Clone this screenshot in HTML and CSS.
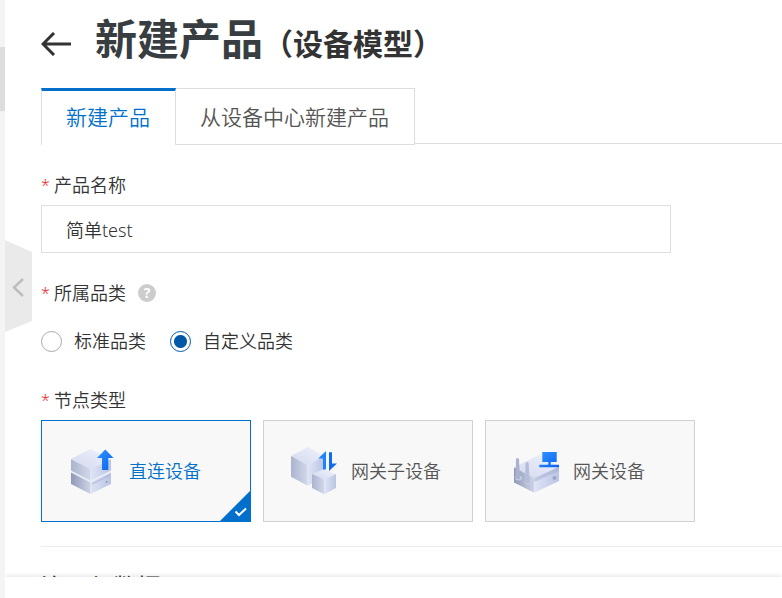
FILE: index.html
```
<!DOCTYPE html>
<html lang="zh-CN">
<head>
<meta charset="utf-8">
<title>新建产品（设备模型）</title>
<link rel="stylesheet" href="styles.css">
</head>
<body>
	<div class="sidebar"><div class="scroll-thumb"></div></div>

	<div class="page">
		<button type="button" class="collapse" aria-label="收起">
			<svg width="27" height="92" viewBox="0 0 27 92">
				<path d="M0 0L27 12V81L0 92Z" fill="#eaeaea"/>
				<path d="M18 39L9 47.500L18 56" fill="none" stroke="#bdbdbd" stroke-width="2.500"/>
			</svg>
		</button>

		<main class="content">
			<header class="title">
				<a href="#" class="back" aria-label="返回">
					<svg width="30" height="24" viewBox="0 0 30 24" fill="none" stroke="#333" stroke-width="3">
						<path d="M2 12H30M13 1L2 12L13 23"/>
					</svg>
				</a>
				<h1>新建产品<small>（设备模型）</small></h1>
			</header>

			<nav class="tabs">
				<a href="#" class="tab active">新建产品</a>
				<a href="#" class="tab">从设备中心新建产品</a>
			</nav>

			<form class="form">
				<div class="field">
					<label class="label" for="name"><span class="star">*</span>产品名称</label>
					<input class="text" id="name" type="text" value="简单test">
				</div>

				<div class="field">
					<div class="label" id="category"><span class="star">*</span>所属品类<span class="help">?</span></div>
					<div class="radios" role="radiogroup" aria-labelledby="category">
						<label class="radio"><input type="radio" name="category">标准品类</label>
						<label class="radio"><input type="radio" name="category" checked>自定义品类</label>
					</div>
				</div>

				<div class="field">
					<div class="label" id="node"><span class="star">*</span>节点类型</div>
					<div class="cards" role="radiogroup" aria-labelledby="node">
						<label class="card">
							<input type="radio" name="node" checked>
							<svg class="icon" viewBox="0 0 48 48">
								<defs>
									<linearGradient id="top" x1="0" y1="1" x2="1" y2="0"><stop offset="0" stop-color="#d2d8ee"/><stop offset="1" stop-color="#f0f2fc"/></linearGradient>
									<linearGradient id="left"><stop offset="0" stop-color="#aab4ce"/><stop offset="1" stop-color="#d2d8ea"/></linearGradient>
									<linearGradient id="dark"><stop offset="0" stop-color="#8f9ab8"/><stop offset="1" stop-color="#ced4e6"/></linearGradient>
									<linearGradient id="right"><stop offset="0" stop-color="#dfe4f6"/><stop offset="1" stop-color="#bac4e2"/></linearGradient>
									<linearGradient id="blue" x1="0" y1="0" x2="1" y2="1"><stop offset="0" stop-color="#2f93ff"/><stop offset="1" stop-color="#0a62f0"/></linearGradient>
								</defs>
								<path fill="#e9ecf7" d="M2 25L21 15L42 25L21 36Z"/>
								<path fill="url(#dark)" d="M2 25.500L21.500 35.500V47L2 37Z"/>
								<path fill="url(#right)" d="M42 25.500L21.500 35.500V47L42 37Z"/>
								<path fill="#a4b0d4" d="M23 36L41 27V29L23 38Z" opacity=".5"/>
								<circle cx="37.500" cy="35" r="1" fill="#8c9ac4"/>
								<path fill="url(#left)" d="M2 12L21.500 22V33.500L2 23.500Z"/>
								<path fill="url(#right)" d="M42 12L21.500 22V33.500L42 23.500Z"/>
								<path fill="url(#top)" d="M21.500 2L42 12L21.500 22L2 12Z"/>
								<path fill="url(#blue)" d="M36.300 2.500L44.500 11H39.300V23H33V11H28Z"/>
							</svg>
							<span>直连设备</span>
							<svg class="check" viewBox="0 0 30 30">
								<path d="M30 0V30H0Z" fill="#0070cc"/>
								<path d="M15.500 20.500L19 24L26 17.500" fill="none" stroke="#fff" stroke-width="2"/>
							</svg>
						</label>
						<label class="card">
							<input type="radio" name="node">
							<svg class="icon" viewBox="0 0 48 48">
								<path fill="url(#top)" d="M16.700 0L33.300 9L16.700 18L0 9Z"/>
								<path fill="url(#left)" d="M0 9L16.700 18V38.700L0 29.700Z"/>
								<path fill="url(#right)" d="M33.300 9L16.700 18V38.700L33.300 29.700Z"/>
								<path fill="url(#top)" d="M33.300 22L45 27L33.300 32.500L21 27Z"/>
								<path fill="url(#left)" d="M21 27L33.300 32.500V47.300L21 41Z"/>
								<path fill="url(#right)" d="M45 27L33.300 32.500V47.300L45 41Z"/>
								<path fill="#1f83fb" d="M35 4V22.500H32V11.500H27.300Z"/>
								<path fill="#0f6cf2" d="M38 24V5.300H41V16.500H46Z"/>
							</svg>
							<span>网关子设备</span>
						</label>
						<label class="card">
							<input type="radio" name="node">
							<svg class="icon" viewBox="0 0 48 48">
								<path fill="url(#top)" d="M26.300 7.500L46 19.500L21.300 31L1 20.500Z"/>
								<path fill="url(#dark)" d="M1 20.500L21.300 31V45.700L1 35.500Z"/>
								<path fill="url(#right)" d="M46 19.500L21.300 31V45.700L46 34Z"/>
								<path fill="#a4b0d4" d="M46 20L21.300 31V35L46 24Z" opacity=".55"/>
								<circle cx="41.500" cy="31" r="2" fill="#9aa6c8"/>
								<ellipse cx="5.500" cy="31" rx="3.500" ry="2.500" fill="#c3cadf"/>
								<ellipse cx="15" cy="35" rx="3.500" ry="2.500" fill="#c3cadf"/>
								<path fill="#a9b3cf" d="M3 12Q4.500 10 6 12L7 32H2.500Z"/>
								<path fill="#b5bdd8" d="M12.500 16Q14 14 15.700 16L16.500 36H12Z"/>
								<path fill="url(#blue)" d="M29.300 5H43.700V15H37.700V17.700H46V20.300H26.300V17.700H35.300V15H29.300Z"/>
							</svg>
							<span>网关设备</span>
						</label>
					</div>
				</div>
			</form>

			<section class="data">
				<h2>连网与数据</h2>
			</section>
		</main>

		<footer class="footer"></footer>
	</div>
</body>
</html>
```
FILE: styles.css
```
* {
	box-sizing: border-box;
}

body {
	margin: 0;
	height: 100vh;
	display: flex;
	background: #fff;
	color: #333;
	font-family: "Noto Sans", "Noto Sans CJK SC", sans-serif;
	font-size: 18px;
	font-weight: 350;
	line-height: 24px;
	overflow: hidden;
}

.sidebar {
	position: relative;
	z-index: 1;
	flex: none;
	width: 5px;
	padding-top: 47px;
	background: #f4f4f4;
}

.scroll-thumb {
	height: 64px;
	background: #ddd;
}

.page {
	position: relative;
	flex: 1;
	min-width: 0;
	display: flex;
	flex-direction: column;
}

/* handle that folds the side menu, floats over the page edge */
.collapse {
	position: absolute;
	left: 0;
	top: 240px;
	padding: 0;
	border: 0;
	background: none;
	cursor: pointer;
}

.collapse svg,
.back svg {
	display: block;
}

.content {
	flex: 1;
	min-height: 0;
	padding-left: 36px;
	overflow: hidden;
}

.title {
	display: flex;
	align-items: center;
	gap: 24px;
	height: 88px;
}

h1 {
	margin: 0;
	padding-bottom: 6px;
	color: #373d41;
	font-size: 42px;
	line-height: 56px;
	white-space: nowrap;
}

h1 small {
	color: #333;
	font-size: 30px;
}

.tabs {
	display: flex;
	height: 56px;
	border-bottom: 1px solid #dedede;
}

.tab {
	height: 57px;
	padding: 0 25px 0 24px;
	border: 1px solid #dedede;
	border-left: 0;
	background: #fff;
	color: #555;
	font-size: 21px;
	line-height: 57px;
	text-decoration: none;
	white-space: nowrap;
}

.tab.active {
	border-left: 1px solid #dedede;
	border-top: 3px solid #0070cc;
	border-bottom: 0;
	color: #0070cc;
	line-height: 53px;
}

.form {
	display: flex;
	flex-direction: column;
	gap: 28px;
	padding: 29px 0 24px;
	border-bottom: 1px solid #ebebeb;
}

.label {
	display: flex;
	align-items: center;
	margin-bottom: 8px;
}

.star {
	width: 13px;
	color: #e82c2c;
	font-size: 16px;
}

.help {
	width: 18px;
	height: 18px;
	margin-left: 12px;
	border-radius: 50%;
	background: #ccc;
	color: #fff;
	font-size: 14px;
	font-weight: bold;
	line-height: 18px;
	text-align: center;
}

.text {
	display: block;
	width: 630px;
	max-width: 100%;
	height: 48px;
	padding: 0 24px;
	border: 1px solid #dedede;
	color: #333;
	font: inherit;
}

.radios {
	display: flex;
	gap: 24px;
	padding: 16px 0 7px;
}

.radio {
	display: flex;
	align-items: center;
	gap: 12px;
}

.radio input {
	appearance: none;
	width: 21px;
	height: 21px;
	margin: 0;
	border: 1px solid #aaa;
	border-radius: 50%;
}

.radio input:checked {
	border-color: #0058a6;
	background: radial-gradient(circle, #0058a6 6px, #fff 7px);
}

.cards {
	display: flex;
	gap: 12px;
}

.card {
	position: relative;
	display: flex;
	align-items: center;
	gap: 12px;
	width: 210px;
	height: 102px;
	padding-left: 27px;
	border: 1px solid #d1d1d1;
	background: #f8f8f8;
	color: #555;
	white-space: nowrap;
}

.card input {
	position: absolute;
	margin: 0;
	opacity: 0;
}

.card:has(input:checked) {
	border-color: #0070cc;
	color: #0070cc;
}

.icon {
	width: 48px;
	height: 48px;
	overflow: visible;
}

.check {
	position: absolute;
	right: 0;
	bottom: 0;
	width: 30px;
	height: 30px;
}

h2 {
	margin: 24px 0;
	font-size: 24px;
	font-weight: 400;
	line-height: 32px;
}

.footer {
	position: relative;
	flex: none;
	height: 21px;
	background: #fff;
	box-shadow: 0 0 6px rgba(0, 0, 0, .15);
}
```
